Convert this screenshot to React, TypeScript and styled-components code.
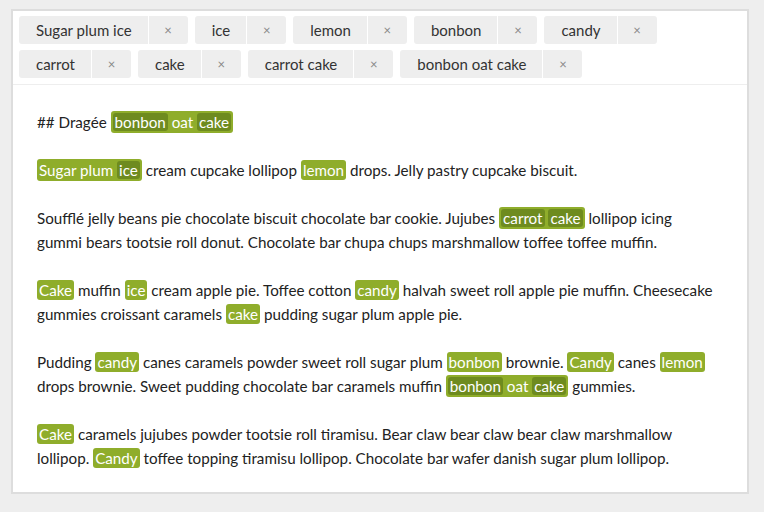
import React from "react";
import styled, { createGlobalStyle } from "styled-components";

const GlobalStyle = createGlobalStyle`
  html, body {
    margin: 0;
    background: #eeeeee;
  }
  body {
    padding: 9px 15px 0 11px;
    font-family: Lato, "Liberation Sans", sans-serif;
    color: #222;
  }
`;

const Panel = styled.div`
  width: 738px;
  box-sizing: border-box;
  border: 2px solid #dddddd;
  background: #fff;
`;

const TagList = styled.div`
  display: flex;
  flex-wrap: wrap;
  gap: 6px 7px;
  padding: 5px 6px 6px;
  border-bottom: 1px solid #eeeeee;
`;

const Tag = styled.div`
  display: flex;
  height: 28px;
  background: #eeeeee;
  border-radius: 3px;
  overflow: hidden;
  font-size: 15px;
  color: #333;
`;

const TagLabel = styled.span`
  display: flex;
  align-items: center;
  padding: 0 16px 0 17px;
  white-space: nowrap;
`;

const TagRemove = styled.button`
  width: 40px;
  border: 0;
  border-left: 1px solid #fff;
  background: transparent;
  color: #888;
  font-family: inherit;
  font-size: 13px;
  padding: 0;
  cursor: pointer;
`;

const Content = styled.div`
  padding: 25px 30px 22px 24px;
  font-size: 15.2px;
  line-height: 24px;
`;

const Para = styled.p`
  margin: 0 0 24px;
  &:last-child {
    margin-bottom: 0;
  }
`;

type Tone = "single" | "outer" | "inner";

const Hl = styled.mark<{ $tone?: Tone }>`
  color: #fff;
  border-radius: 3px;
  background: ${(p) => (p.$tone === "inner" ? "#6e8b1f" : "#8fad2b")};
  padding: ${(p) =>
    p.$tone === "outer" ? "2px 2px" : p.$tone === "inner" ? "0 2px" : "1px 2px"};
`;

const tags = [
  "Sugar plum ice",
  "ice",
  "lemon",
  "bonbon",
  "candy",
  "carrot",
  "cake",
  "carrot cake",
  "bonbon oat cake",
];

const H = ({ children }: { children: React.ReactNode }) => <Hl>{children}</Hl>;
const O = ({ children }: { children: React.ReactNode }) => <Hl $tone="outer">{children}</Hl>;
const I = ({ children }: { children: React.ReactNode }) => <Hl $tone="inner">{children}</Hl>;

export default function App() {
  return (
    <>
      <GlobalStyle />
      <Panel>
        <TagList>
          {tags.map((t) => (
            <Tag key={t}>
              <TagLabel>{t}</TagLabel>
              <TagRemove aria-label={`remove ${t}`}>×</TagRemove>
            </Tag>
          ))}
        </TagList>
        <Content>
          <Para>
            ## Dragée{" "}
            <O>
              <I>bonbon</I> oat <I>cake</I>
            </O>
          </Para>
          <Para>
            <O>
              Sugar plum <I>ice</I>
            </O>{" "}
            cream cupcake lollipop <H>lemon</H> drops. Jelly pastry cupcake biscuit.
          </Para>
          <Para>
            Soufflé jelly beans pie chocolate biscuit chocolate bar cookie. Jujubes{" "}
            <O>
              <I>carrot</I> <I>cake</I>
            </O>{" "}
            lollipop icing gummi bears tootsie roll donut. Chocolate bar chupa chups
            marshmallow toffee toffee muffin.
          </Para>
          <Para>
            <H>Cake</H> muffin <H>ice</H> cream apple pie. Toffee cotton <H>candy</H>{" "}
            halvah sweet roll apple pie muffin. Cheesecake gummies croissant caramels{" "}
            <H>cake</H> pudding sugar plum apple pie.
          </Para>
          <Para>
            Pudding <H>candy</H> canes caramels powder sweet roll sugar plum{" "}
            <H>bonbon</H> brownie. <H>Candy</H> canes <H>lemon</H> drops brownie. Sweet
            pudding chocolate bar caramels muffin{" "}
            <O>
              <I>bonbon</I> oat <I>cake</I>
            </O>{" "}
            gummies.
          </Para>
          <Para>
            <H>Cake</H> caramels jujubes powder tootsie roll tiramisu. Bear claw bear
            claw bear claw marshmallow lollipop. <H>Candy</H> toffee topping tiramisu
            lollipop. Chocolate bar wafer danish sugar plum lollipop.
          </Para>
        </Content>
      </Panel>
    </>
  );
}
